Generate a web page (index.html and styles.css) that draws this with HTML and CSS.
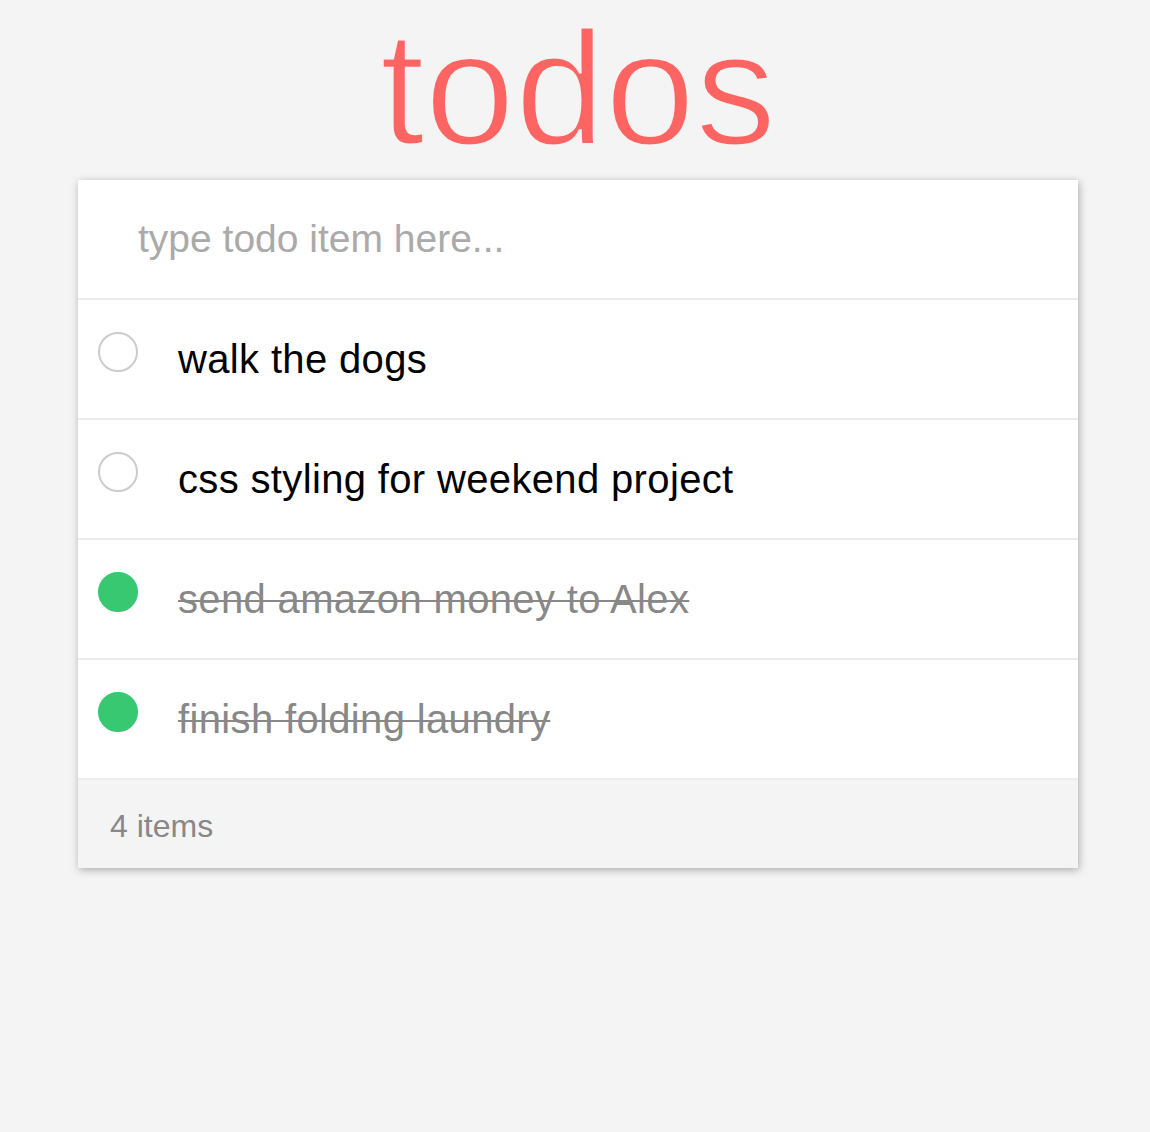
FILE: index.html
```html
<!DOCTYPE html>
<html>
<head>
<meta charset="utf-8">
<link rel="stylesheet" href="styles.css">
</head>
<body>
<div class="app">
  <h1 class="title">todos</h1>
  <div class="card">
    <div class="new-todo">type todo item here...</div>
    <ul class="list">
      <li class="item"><span class="check"></span><span class="label">walk the dogs</span></li>
      <li class="item"><span class="check"></span><span class="label">css styling for weekend project</span></li>
      <li class="item done"><span class="check"></span><span class="label">send amazon money to Alex</span></li>
      <li class="item done"><span class="check"></span><span class="label">finish folding laundry</span></li>
    </ul>
    <div class="footer">4 items</div>
  </div>
</div>
</body>
</html>
```
FILE: styles.css
```css
html, body {
  margin: 0;
  padding: 0;
  background: #f4f4f4;
  font-family: "Liberation Sans", Arial, sans-serif;
}
body {
  min-height: 1132px;
}
.app {
  width: 1000px;
  margin-left: 78px;
  padding-bottom: 60px;
}
.title {
  margin: 0;
  height: 180px;
  font-size: 162px;
  line-height: 176px;
  font-weight: normal;
  color: #fe6461;
  text-align: center;
  -webkit-text-stroke: 3px #f4f4f4;
}
.card {
  background: #fff;
  box-shadow: 1px 2px 8px rgba(0, 0, 0, 0.3);
}
.new-todo {
  height: 120px;
  box-sizing: border-box;
  padding-left: 60px;
  font-size: 39px;
  line-height: 118px;
  color: #aaa;
  border-bottom: 2px solid #ededed;
}
.list {
  list-style: none;
  margin: 0;
  padding: 0;
}
.item {
  display: flex;
  align-items: flex-start;
  height: 120px;
  box-sizing: border-box;
  border-bottom: 2px solid #ededed;
}
.check {
  width: 40px;
  height: 40px;
  box-sizing: border-box;
  border: 2px solid #ccc;
  border-radius: 50%;
  margin: 32px 40px 0 20px;
  flex: none;
}
.label {
  font-size: 40px;
  letter-spacing: 0.35px;
  line-height: 40px;
  margin-top: 39px;
  color: #000;
}
.done .check {
  background: #38c872;
  border-color: #38c872;
}
.done .label {
  color: #888;
  text-decoration: line-through;
  text-decoration-thickness: 2px;
}
.footer {
  height: 88px;
  background: #f4f4f4;
  box-sizing: border-box;
  padding: 4px 0 0 32px;
  font-size: 32px;
  line-height: 84px;
  color: #888;
}
```
